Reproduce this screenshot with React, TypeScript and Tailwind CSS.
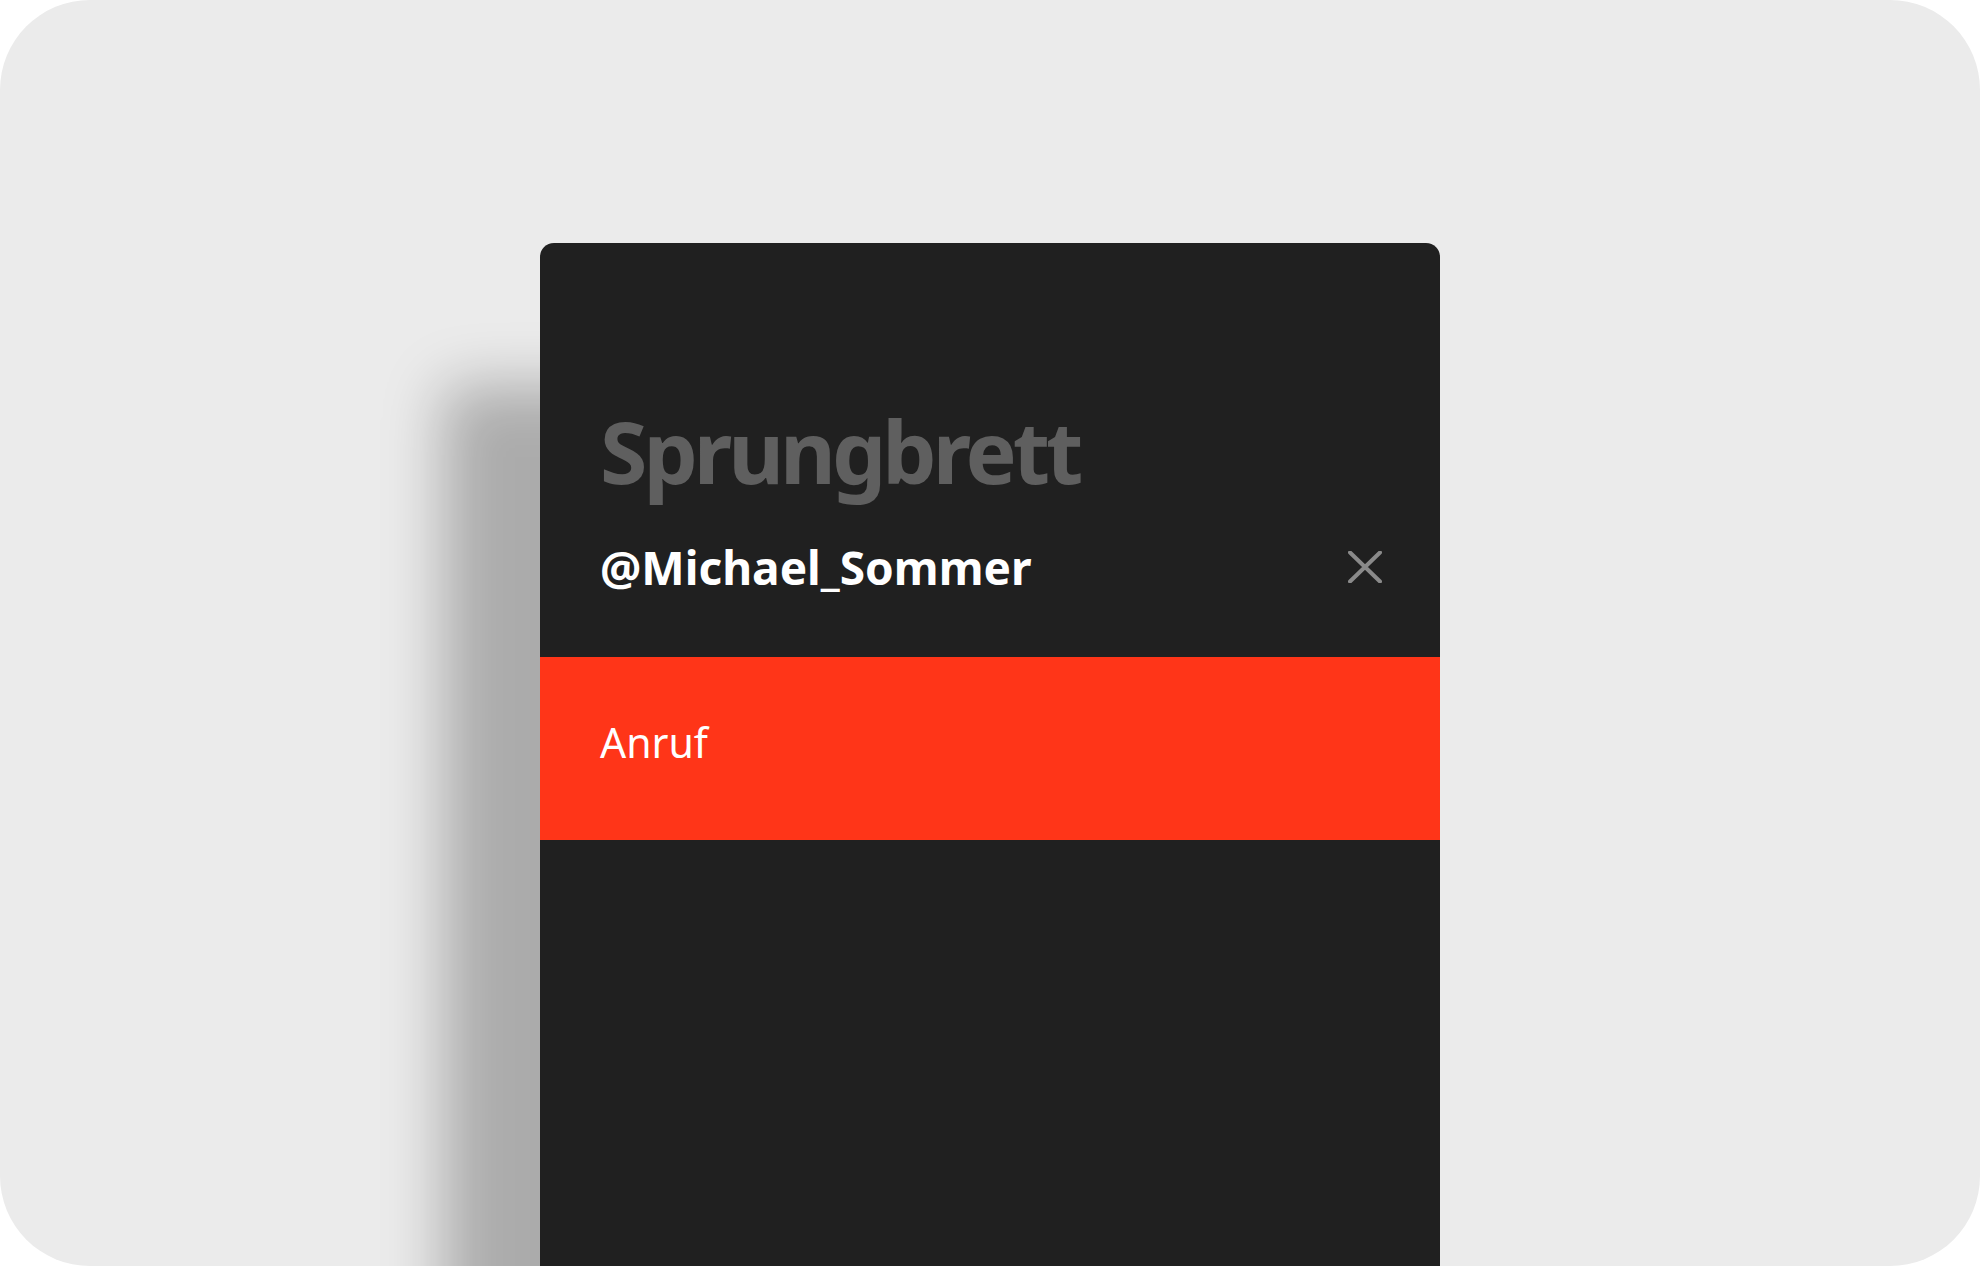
export default function App() {
  return (
    <div className="w-[1980px] h-[1266px] bg-white overflow-hidden">
      <div
        className="w-full h-full bg-[#ebebeb] rounded-[90px] overflow-hidden flex justify-center pt-[243px]"
        style={{ fontFamily: '"Noto Sans", "Open Sans", sans-serif' }}
      >
        <div className="w-[900px] h-full bg-[#202020] rounded-t-[14px] shadow-[-97px_142px_60px_rgba(0,0,0,0.27)] flex flex-col">
          <div className="px-[60px] pt-[165px]">
            <h1 className="text-[86px] leading-none font-bold text-[#5f5f5f] tracking-[-4px]">
              Sprungbrett
            </h1>
            <div className="mt-[50px] flex items-center justify-between">
              <span className="text-[46px] leading-none font-bold text-white">
                @Michael_Sommer
              </span>
              <button type="button" className="w-[34px] h-[34px] flex items-center justify-center mr-[-2px]">
                <svg width="34" height="32" viewBox="0 0 34 32" fill="none">
                  <path d="M2 1.5 L32 30.5 M32 1.5 L2 30.5" stroke="#8a8a8a" strokeWidth="4" strokeLinecap="round" />
                </svg>
              </button>
            </div>
          </div>
          <div className="mt-[67px] h-[183px] bg-[#ff3518] px-[60px] pt-[65px]">
            <span className="text-[41px] leading-none text-white">Anruf</span>
          </div>
        </div>
      </div>
    </div>
  );
}
